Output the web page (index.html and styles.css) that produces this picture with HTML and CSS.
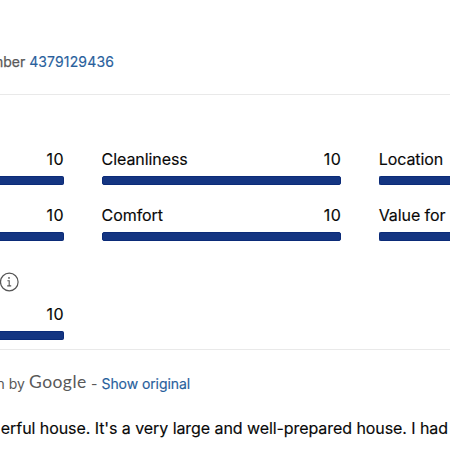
FILE: index.html
```html
<!DOCTYPE html>
<html lang="en">
<head>
<meta charset="utf-8">
<title>Guest review</title>
<link rel="stylesheet" href="styles.css">
</head>
<body>
<main class="review">
  <header class="booking"><p class="clip booking-text"><span><span class="label">mber</span> <a class="number">4379129436</a></span></p></header>
  <section class="scores">
    <div class="score"><div class="line end"><span class="ten">10</span></div><div class="bar bar-left"></div></div>
    <div class="score"><div class="line"><span class="name">Cleanliness</span><span class="ten">10</span></div><div class="bar"></div></div>
    <div class="score"><div class="line"><span class="name">Location</span></div><div class="bar"></div></div>
    <div class="score"><div class="line end"><span class="ten">10</span></div><div class="bar bar-left"></div></div>
    <div class="score"><div class="line"><span class="name">Comfort</span><span class="ten">10</span></div><div class="bar"></div></div>
    <div class="score"><div class="line"><span class="name">Value for</span></div><div class="bar"></div></div>
  </section>
  <div class="info">
    <svg class="info-icon" width="20" height="20" viewBox="0 0 20 20" fill="none" stroke="#555">
      <circle cx="10.3" cy="10" r="8.8" stroke-width="1.2"/>
      <path d="M8.4 8.7H10.2V13.7M8.2 13.9H12.2" stroke-width="1.1"/>
      <circle cx="10" cy="5.9" r=".9" fill="#555" stroke="none"/>
    </svg>
  </div>
  <div class="score single"><div class="line end"><span class="ten">10</span></div><div class="bar bar-left"></div></div>
  <footer class="comment">
    <div class="translation"><p class="clip by"><span>n by</span></p><span class="google">Google</span><span class="dash">-</span><a class="original">Show original</a></div>
    <p class="clip body"><span>erful house. It's a very large and well-prepared house. I had</span></p>
  </footer>
</main>
</body>
</html>
```
FILE: styles.css
```css
* { box-sizing: border-box; }
body { margin: 0; background: #fff; color: #080808; font: 16px/20px Inter, "Liberation Sans", sans-serif; }
p { margin: 0; }
.review { width: 450px; height: 450px; overflow: hidden; }
.clip { display: flex; justify-content: flex-end; overflow: hidden; white-space: nowrap; }
.booking { height: 95px; padding-top: 52px; border-bottom: 1px solid #e9e9e9; font-size: 14px; }
.booking-text { width: 114px; }
.label { color: #595959; -webkit-text-stroke: .25px #595959; }
.number { letter-spacing: .14px; }
.number, .original { color: #28609c; -webkit-text-stroke: .15px #28609c; }
.scores { display: grid; grid-template-columns: 64px 239.5px 71px; column-gap: 37.6px; row-gap: 20px; padding-top: 54px; }
.score { height: 36px; }
.line { display: flex; justify-content: space-between; height: 27px; white-space: nowrap; -webkit-text-stroke: .15px #080808; }
.line.end { justify-content: flex-end; }
.name { letter-spacing: -.08px; }
.ten { letter-spacing: .5px; margin-right: -.2px; }
.bar { height: 9px; border-radius: 2px; background: #143582; border: 1px solid #0b2b78; }
.bar-left { border-left: 0; border-radius: 0 2px 2px 0; }
.score:nth-child(3n) .bar { border-right: 0; border-radius: 2px 0 0 2px; }
.info { height: 63px; padding-top: 31px; }
.info-icon { display: block; margin-left: -1px; }
.single { width: 64px; }
.comment { margin-top: 9px; border-top: 1px solid #e9e9e9; padding-top: 23px; }
.translation { display: flex; height: 22px; font-size: 14px; line-height: 21px; color: #595959; }
.by { width: 25px; }
.google { width: 58px; margin-left: 4px; font: 17.5px/18px Lato, sans-serif; letter-spacing: .45px; }
.dash { margin-left: 4px; width: 10.5px; }
.original { white-space: nowrap; letter-spacing: -.08px; }
.body { width: 448px; margin-top: 23px; letter-spacing: -.07px; -webkit-text-stroke: .15px #080808; }
```
